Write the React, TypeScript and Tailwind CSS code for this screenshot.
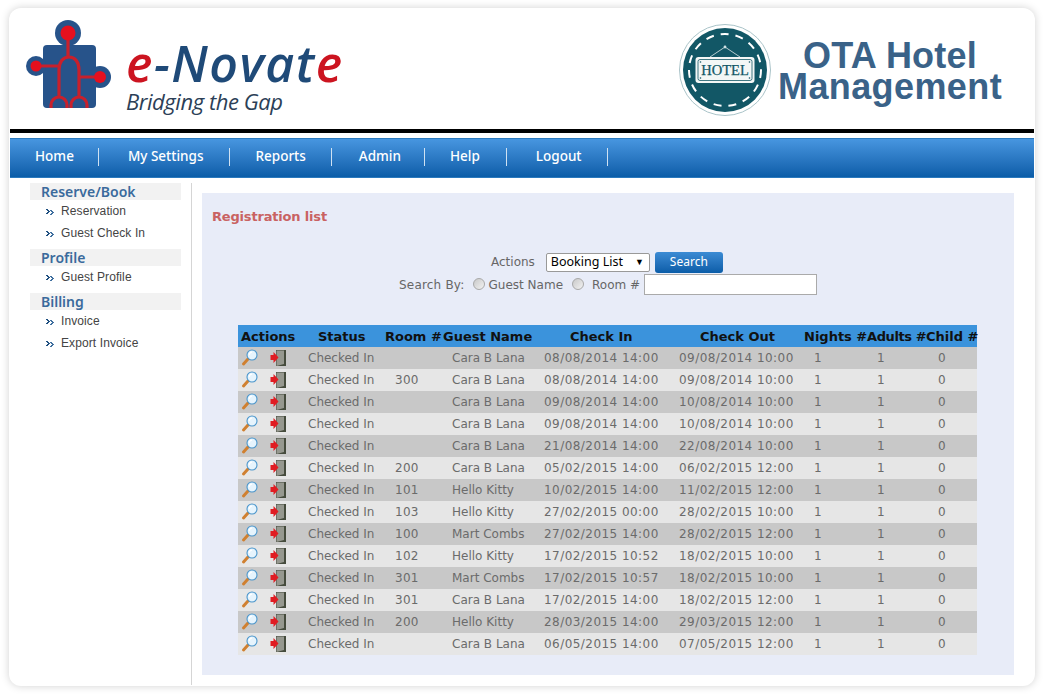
import React from 'react';

const rows = [
  ['', 'Cara B Lana', '08/08/2014 14:00', '09/08/2014 10:00'],
  ['300', 'Cara B Lana', '08/08/2014 14:00', '09/08/2014 10:00'],
  ['', 'Cara B Lana', '09/08/2014 14:00', '10/08/2014 10:00'],
  ['', 'Cara B Lana', '09/08/2014 14:00', '10/08/2014 10:00'],
  ['', 'Cara B Lana', '21/08/2014 14:00', '22/08/2014 10:00'],
  ['200', 'Cara B Lana', '05/02/2015 14:00', '06/02/2015 12:00'],
  ['101', 'Hello Kitty', '10/02/2015 14:00', '11/02/2015 12:00'],
  ['103', 'Hello Kitty', '27/02/2015 00:00', '28/02/2015 10:00'],
  ['100', 'Mart Combs', '27/02/2015 14:00', '28/02/2015 12:00'],
  ['102', 'Hello Kitty', '17/02/2015 10:52', '18/02/2015 10:00'],
  ['301', 'Mart Combs', '17/02/2015 10:57', '18/02/2015 10:00'],
  ['301', 'Cara B Lana', '17/02/2015 14:00', '18/02/2015 12:00'],
  ['200', 'Hello Kitty', '28/03/2015 14:00', '29/03/2015 12:00'],
  ['', 'Cara B Lana', '06/05/2015 14:00', '07/05/2015 12:00'],
];

const menu = [
  { label: 'Home', gap: 'pr-[24px] mr-[29px]' },
  { label: 'My Settings', gap: 'pr-[26px] mr-[25px]' },
  { label: 'Reports', gap: 'pr-[25px] mr-[27px]' },
  { label: 'Admin', gap: 'pr-[23px] mr-[25px]' },
  { label: 'Help', gap: 'pr-[26px] mr-[29px]' },
  { label: 'Logout', gap: 'pr-[25px] mr-0' },
];

const sideMenu = [
  { title: 'Reserve/Book', links: ['Reservation', 'Guest Check In'] },
  { title: 'Profile', links: ['Guest Profile'] },
  { title: 'Billing', links: ['Invoice', 'Export Invoice'] },
];

const Magnifier = () => (
  <svg width="18" height="18" viewBox="0 0 18 18" className="block">
    <path d="M8 10 L3.5 15" stroke="#d08030" strokeWidth="3" strokeLinecap="round" />
    <circle cx="12" cy="6" r="5" fill="#e6f4fd" stroke="#4a96cc" strokeWidth="1.1" />
    <path d="M9.3 6 A2.8 2.8 0 0 1 12 3.2" fill="none" stroke="#fff" strokeWidth="1.2" />
  </svg>
);

const ExitDoor = () => (
  <svg width="18" height="18" viewBox="0 0 18 18" className="block">
    <path d="M6 1 H16 V17 H6 Z" fill="#454b3c" />
    <path d="M6.5 1.5 H14 V15 L6.5 17 Z" fill="#96988f" />
    <path d="M0.5 6 H3.5 V3 L8.5 8.5 L3.5 14 V11 H0.5 Z" fill="#e01c22" />
  </svg>
);

const Bullet = () => (
  <svg width="8" height="7" viewBox="0 0 8 7" className="block">
    <path d="M0 0h2v1h1v1h1v1h-1v1h-1v1h-2v-1h1v-1h1v-1h-1v-1h-1z" fill="#1f4f80" />
    <path d="M4 1h2v1h1v1h1v1h-1v1h-1v1h-2v-1h1v-1h1v-1h-1v-1h-1z" fill="#3f6f9f" />
  </svg>
);

const PuzzleLogo = () => (
  <svg width="88" height="92" viewBox="0 0 88 92" className="block">
    <g fill="#27538a">
      <rect x="18" y="25" width="53" height="63" rx="4" />
      <circle cx="43" cy="13" r="13" />
      <circle cx="11" cy="46" r="10" />
      <circle cx="75" cy="57" r="11" />
    </g>
    <g fill="none" stroke="#c8202c" strokeWidth="3.2">
      <path d="M43 13 V37" />
      <path d="M11 46 H34" />
      <path d="M75 57 H54" />
      <path d="M34 76 V50 C34 42 38 37 44 37 C50 37 54 42 54 50 V76" />
      <path d="M26 88 V85 A8 8 0 0 1 42 85 V88 M46 88 V85 A8 8 0 0 1 62 85 V88" />
    </g>
    <circle cx="43" cy="13" r="7.5" fill="#e5101e" />
    <circle cx="11" cy="46" r="5.5" fill="#e5101e" />
    <circle cx="75" cy="57" r="6" fill="#e5101e" />
  </svg>
);

const HotelBadge = () => (
  <svg width="92" height="92" viewBox="0 0 92 92" className="block">
    <circle cx="46" cy="46" r="45.5" fill="#fff" stroke="#a9c3c8" strokeWidth="1" />
    <circle cx="46" cy="46" r="42" fill="#125766" />
    <circle cx="46" cy="46" r="36" fill="none" stroke="#fff" strokeWidth="2" strokeDasharray="8 7" />
    <path d="M31 33 L46 23 L61 33" fill="none" stroke="#dfe9ea" strokeWidth="0.8" />
    <circle cx="46" cy="23" r="1.4" fill="#cfe0e2" />
    <rect x="16.5" y="33" width="59" height="26" rx="3" fill="#f3f7f6" />
    <rect x="19" y="35.5" width="54" height="21" rx="2" fill="none" stroke="#125766" strokeWidth="0.8" />
    <circle cx="21.5" cy="38" r="0.8" fill="#125766" />
    <circle cx="70.5" cy="38" r="0.8" fill="#125766" />
    <circle cx="21.5" cy="54" r="0.8" fill="#125766" />
    <circle cx="70.5" cy="54" r="0.8" fill="#125766" />
    <text x="46" y="51" textAnchor="middle" fontFamily="'Liberation Serif', serif" fontSize="14.5" fill="#125766" stroke="#125766" strokeWidth="0.25">HOTEL</text>
  </svg>
);

const Radio = () => <div className="w-[12px] h-[12px] rounded-full border border-[#a8a8a8] bg-gradient-to-br from-[#c9c9c9] to-[#f2f2f2] -mt-[3px]" />;

export default function App() {
  return (
    <div className="min-h-[698px] bg-white pt-2 px-[9px] pb-3 font-['Liberation_Sans',sans-serif]">
      <div className="w-[1026px] h-[678px] bg-white rounded-xl shadow-[0_0_8px_rgba(0,0,0,0.18)] overflow-hidden flex flex-col">
        {/* header */}
        <div className="h-[121px] shrink-0 flex justify-between">
          <div className="flex pl-[16px] pt-[12px] gap-[13px]">
            <PuzzleLogo />
            <div className="pt-[18px]">
              <div className="font-['Open_Sans',sans-serif] italic font-semibold text-[50px] leading-[50px] tracking-[1.5px] text-[#1f4a78] whitespace-nowrap">
                <span className="text-[#cc1420]">e</span>-Novat<span className="text-[#cc1420]">e</span>
              </div>
              <div className="font-['Open_Sans',sans-serif] italic text-[22px] leading-[26px] text-[#2c3f57] -tracking-[0.45px]">
                Bridging the Gap
              </div>
            </div>
          </div>
          <div className="flex pt-[16px] pr-[33px] gap-[7px]">
            <HotelBadge />
            <div className="pt-[16px] font-bold text-[36px] leading-[31px] tracking-[0.2px] text-[#3a6288] text-center w-[224px] whitespace-nowrap">
              OTA Hotel
              <div className="tracking-[0.4px]">Management</div>
            </div>
          </div>
        </div>
        <div className="h-1 mx-[1px] bg-black shrink-0" />
        {/* main nav */}
        <div className="mt-[5px] mx-[1px] h-[40px] shrink-0 border-y border-[#2b79bd] bg-gradient-to-b from-[#4796e0] to-[#0a5da8] flex items-center pl-[25px] pb-[3px]">
          {menu.map((m) => (
            <div key={m.label} className={`h-[18px] flex items-center border-r border-[#cfe2f3] text-white text-[13.5px] font-medium font-['Noto_Sans',sans-serif] ${m.gap}`}>
              {m.label}
            </div>
          ))}
        </div>
        {/* body */}
        <div className="flex flex-1 min-h-0">
          <div className="w-[183px] shrink-0 border-r border-[#d5d5d5] pl-[21px] pr-[10px] mt-[5px] mb-[1px]">
            {sideMenu.map((s) => (
              <div key={s.title} className="mb-[5px]">
                <div className="h-[17px] bg-[#f2f2f2] pl-[11px] text-[14px] leading-[17px] font-semibold text-[#3a6a9c] font-['Noto_Sans',sans-serif]">
                  {s.title}
                </div>
                {s.links.map((l) => (
                  <div key={l} className="h-[22px] flex items-center pl-[16px] gap-[7px] text-[12px] tracking-[0.1px] text-[#444]">
                    <div className="mt-[3px]">
                      <Bullet />
                    </div>
                    <span className="-mt-[1px]">{l}</span>
                  </div>
                ))}
              </div>
            ))}
          </div>
          <div className="flex-1 pl-[10px] pr-[21px] pt-[15px] pb-[11px]">
            <div className="h-[482px] bg-[#e8ecf8] pl-[10px] pt-[16px]">
              <div className="font-['DejaVu_Sans',sans-serif] font-bold text-[13px] leading-[16px] -tracking-[0.18px] text-[#c96262]">
                Registration list
              </div>
              <div className="mt-[26px] flex items-center h-[22px] text-[12px] text-[#666] font-['DejaVu_Sans',sans-serif] pl-[279px]">
                <span className="mr-[11px]">Actions</span>
                <div className="w-[104px] h-[19px] border border-[#999] rounded-[2px] bg-white flex items-center justify-between pl-[4px] pr-[5px] text-black text-[12.5px] font-['Noto_Sans',sans-serif]">
                  Booking List<span className="text-[9px]">▼</span>
                </div>
                <button className="ml-[5px] w-[68px] h-[21px] rounded-[3px] bg-gradient-to-b from-[#3b8bd4] to-[#0a5da8] text-white text-[12px] font-['Noto_Sans',sans-serif]">
                  Search
                </button>
              </div>
              <div className="mt-[1px] flex items-center h-[22px] text-[12px] text-[#666] font-['DejaVu_Sans',sans-serif] pl-[187px]">
                <span className="tracking-[0.2px]">Search By:</span>
                <div className="ml-[8px]">
                  <Radio />
                </div>
                <span className="ml-[4px]">Guest Name</span>
                <div className="ml-[9px]">
                  <Radio />
                </div>
                <span className="ml-[8px]">Room #</span>
                <div className="ml-[4px] -mt-[2px] w-[173px] h-[21px] border border-[#aaa] bg-white" />
              </div>
              <table className="mt-[29px] ml-[26px] w-[739px] table-fixed border-collapse font-['DejaVu_Sans',sans-serif] text-[12px]">
                <colgroup>
                  <col className="w-[60px]" />
                  <col className="w-[59px]" />
                  <col className="w-[86px]" />
                  <col className="w-[91px]" />
                  <col className="w-[135px]" />
                  <col className="w-[135px]" />
                  <col className="w-[63px]" />
                  <col className="w-[49px]" />
                  <col className="w-[61px]" />
                </colgroup>
                <thead>
                  <tr className="h-[22px] bg-[#3b93dc] text-[13px] font-bold text-[#111] text-left whitespace-nowrap [&>th]:pt-[2px]">
                    <th className="pl-[3px]">Actions</th>
                    <th className="pl-[20px]">Status</th>
                    <th className="pl-[28px]">Room #</th>
                    <th>Guest Name</th>
                    <th className="pl-[36px]">Check In</th>
                    <th className="pl-[31px]">Check Out</th>
                    <th>Nights #</th>
                    <th className="-tracking-[0.4px]">Adults #</th>
                    <th className="pl-[10px]">Child #</th>
                  </tr>
                </thead>
                <tbody className="text-[#6b6b6b]">
                  {rows.map((r, i) => (
                    <tr key={i} className={`h-[22px] ${i % 2 === 0 ? 'bg-[#c8c8c8]' : 'bg-[#e6e6e6]'}`}>
                      <td>
                        <div className="flex pl-[2px] gap-[12px]">
                          <Magnifier />
                          <ExitDoor />
                        </div>
                      </td>
                      <td className="pl-[10px] whitespace-nowrap">Checked In</td>
                      <td className="pl-[38px] tracking-[0.3px]">{r[0]}</td>
                      <td className="pl-[9px] whitespace-nowrap">{r[1]}</td>
                      <td className="pl-[10px] whitespace-nowrap tracking-[0.45px]">{r[2]}</td>
                      <td className="pl-[10px] whitespace-nowrap tracking-[0.45px]">{r[3]}</td>
                      <td className="pl-[10px]">1</td>
                      <td className="pl-[10px]">1</td>
                      <td className="pl-[22px]">0</td>
                    </tr>
                  ))}
                </tbody>
              </table>
            </div>
          </div>
        </div>
      </div>
    </div>
  );
}
